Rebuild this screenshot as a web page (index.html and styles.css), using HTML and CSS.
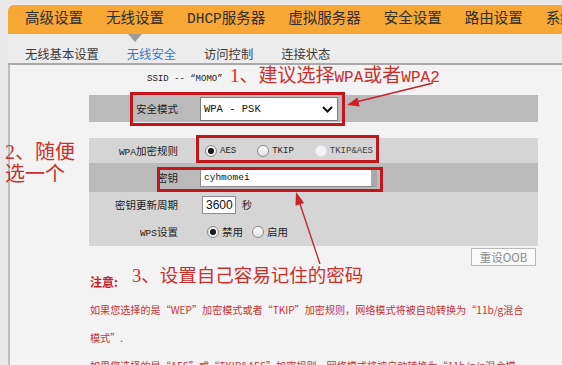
FILE: index.html
```html
<!DOCTYPE html>
<html lang="zh-CN">
<head>
<meta charset="utf-8">
<title>无线安全</title>
<link rel="stylesheet" href="styles.css">
</head>
<body>
<div class="page">
  <nav class="nav">
    <span class="nav-item">高级设置</span>
    <span class="nav-item active">无线设置</span>
    <span class="nav-item">DHCP服务器</span>
    <span class="nav-item">虚拟服务器</span>
    <span class="nav-item">安全设置</span>
    <span class="nav-item">路由设置</span>
    <span class="nav-item">系统工具</span>
  </nav>
  <div class="subnav">
    <span class="sub-item">无线基本设置</span>
    <span class="sub-item active">无线安全</span>
    <span class="sub-item">访问控制</span>
    <span class="sub-item">连接状态</span>
  </div>
  <main class="content">
    <div class="ssid">SSID -- “MOMO”</div>
    <div class="table t1">
      <div class="row dark r1">
        <div class="label">安全模式</div>
        <div class="ctrl">
          <div class="select">
            <span>WPA - PSK</span>
            <svg class="chev" width="11" height="7" viewBox="0 0 11 7"><polyline points="1,1 5.5,5.5 10,1" fill="none" stroke="#111" stroke-width="2"/></svg>
          </div>
        </div>
      </div>
    </div>
    <div class="table t2">
      <div class="row light r2">
        <div class="label"><span class="lat">WPA</span>加密规则</div>
        <div class="ctrl">
          <span class="choice"><span class="radio checked"></span><span class="opt">AES</span></span>
          <span class="choice"><span class="radio"></span><span class="opt">TKIP</span></span>
          <span class="choice"><span class="radio disabled"></span><span class="opt dim">TKIP&amp;AES</span></span>
        </div>
      </div>
      <div class="row dark r3">
        <div class="label">密钥</div>
        <div class="ctrl"><div class="input key">cyhmomei</div></div>
      </div>
      <div class="row light r4">
        <div class="label">密钥更新周期</div>
        <div class="ctrl"><div class="input period">3600</div><span class="unit">秒</span></div>
      </div>
      <div class="row light r5">
        <div class="label"><span class="lat">WPS</span>设置</div>
        <div class="ctrl wps">
          <span class="choice"><span class="radio checked"></span><span class="opt cjk">禁用</span></span>
          <span class="choice"><span class="radio"></span><span class="opt cjk">启用</span></span>
        </div>
      </div>
    </div>
    <div class="actions"><button class="btn">重设OOB</button></div>
    <div class="notes">
      <div class="note-title">注意:</div>
      <p>如果您选择的是“WEP”加密模式或者“TKIP”加密规则，网络模式将被自动转换为“11b/g混合<br>模式”.</p>
      <p>如果您选择的是“AES”或“TKIP&amp;AES”加密规则，网络模式将被自动转换为“11b/g/n混合模</p>
    </div>
  </main>
</div>
<div class="overlay">
  <div class="box box1"></div>
  <div class="box box2"></div>
  <div class="box box3"></div>
  <div class="ann ann1">1、建议选择<span class="lat">WPA</span>或者<span class="lat">WPA2</span></div>
  <div class="ann ann2">2、随便<br>选一个</div>
  <div class="ann ann3">3、设置自己容易记住的密码</div>
  <svg class="arrows" width="562" height="365" viewBox="0 0 562 365">
    <line x1="433" y1="83" x2="356" y2="102" stroke="#c8202a" stroke-width="1.3"/>
    <polygon points="347,105 359.7,106.4 357.5,97.6" fill="#d01f28"/>
    <line x1="320" y1="264" x2="299" y2="201" stroke="#c8202a" stroke-width="1.3"/>
    <polygon points="296,192 304.1,203 295.5,205.8" fill="#d01f28"/>
  </svg>
</div>
</body>
</html>
```
FILE: styles.css
```css
* { box-sizing: border-box; }
html, body { margin: 0; padding: 0; }
body {
  width: 562px;
  height: 365px;
  overflow: hidden;
  background: #e9e9e9;
  font-family: "Noto Sans CJK SC", sans-serif;
  color: #222;
}
.page { padding: 5px 0 0 8px; }

.nav {
  height: 29px;
  background: #f7a733;
  border-radius: 6px 0 0 0;
  display: flex;
  align-items: center;
  gap: 23px;
  padding-left: 17px;
  white-space: nowrap;
  font-family: "Liberation Mono", "Noto Sans CJK SC", monospace;
  font-size: 14.5px;
  color: #2e2e2e;
}
.nav-item { position: relative; line-height: 29px; flex: none; }
.nav-item.active::after {
  content: "";
  position: absolute;
  left: 50%;
  top: 29px;
  margin-left: -7px;
  border-left: 7px solid transparent;
  border-right: 7px solid transparent;
  border-top: 8px solid #9c9c9c;
}

.subnav {
  height: 31px;
  padding: 12px 0 0 17px;
  display: flex;
  gap: 28px;
  background: #ececec;
  border-bottom: 2px solid #a9a9a9;
  font-size: 12.3px;
  line-height: 16px;
  color: #3a3a3a;
}
.sub-item.active { color: #3b78c6; }

.content {
  height: 300px;
  background: #f3f3f3;
  border-left: 2px solid #bdbdbd;
}

.ssid {
  padding: 7px 0 0 137px;
  font-family: "Liberation Mono", monospace;
  font-size: 9px;
  line-height: 14px;
  color: #222;
}

.table { margin-left: 79px; width: 449px; }
.t1 { margin-top: 9px; }
.t2 { margin-top: 16px; }
.row {
  display: grid;
  grid-template-columns: 89px 1fr;
  column-gap: 22px;
  align-items: center;
}
.dark { background: #bababa; }
.light { background: #d5d5d5; }
.r1 { height: 27px; }
.r2 { height: 25px; }
.r3 { height: 29px; }
.r4 { height: 25px; }
.r5 { height: 29px; }

.label {
  text-align: right;
  font-size: 10.5px;
  color: #1c1c1c;
}
.label .lat { font-family: "Liberation Mono", monospace; font-size: 9.5px; }
.ctrl { display: flex; align-items: center; }

.select {
  width: 138px;
  height: 24px;
  margin-top: 1px;
  background: #fff;
  border: 1px solid #7d7d7d;
  display: flex;
  align-items: center;
  justify-content: space-between;
  padding: 0 4px 0 3px;
  font-family: "Liberation Mono", monospace;
  font-size: 10.5px;
  color: #111;
}

.choice { display: inline-flex; align-items: center; gap: 3px; margin-right: 21px; }
.r2 .ctrl { padding-left: 5px; }
.wps { padding-left: 7px; }
.wps .choice { margin-right: 9px; }
.radio {
  width: 12px;
  height: 12px;
  border-radius: 50%;
  border: 1px solid #8a8a8a;
  background: linear-gradient(#ffffff, #e2e2e2);
  flex: none;
}
.radio.checked {
  background: radial-gradient(circle, #1d1d1d 0 2.8px, #f5f5f5 3.3px, #dcdcdc 100%);
}
.radio.disabled { border-color: #e2e2e2; background: #f4f4f4; }
.opt { font-family: "Liberation Mono", monospace; font-size: 9px; color: #222; }
.opt.dim { color: #444; }
.opt.cjk { font-family: "Noto Sans CJK SC", sans-serif; font-size: 10.5px; }

.input {
  height: 18px;
  background: #fff;
  border: 1px solid #8d8d8d;
  display: flex;
  align-items: center;
  padding-left: 3px;
  color: #111;
}
.key {
  width: 177px;
  border-right: 6px solid #a9a9a9;
  font-family: "Liberation Mono", monospace;
  font-size: 9.5px;
}
.period {
  width: 34px;
  margin-left: 2px;
  font-family: "Liberation Sans", sans-serif;
  font-size: 12px;
}
.unit { margin-left: 6px; font-size: 10px; }

.actions {
  margin: 2px 0 0 79px;
  width: 449px;
  display: flex;
  justify-content: flex-end;
  padding-right: 2px;
}
.btn {
  width: 65px;
  height: 18px;
  padding: 0;
  background: #fafafa;
  border: 1px solid #b8b8b8;
  color: #8a8a8a;
  font-family: "Noto Sans CJK SC", sans-serif;
  font-size: 11.5px;
  line-height: 16px;
}

.notes {
  margin: 2px 0 0 80px;
  line-height: 28px;
  white-space: nowrap;
  color: #c53333;
}
.note-title { font-size: 12px; font-weight: bold; color: #c81e1e; }
.notes p { margin: 0; font-size: 10.1px; }

.overlay {
  position: absolute;
  left: 0;
  top: 0;
  width: 562px;
  height: 365px;
  pointer-events: none;
}
.box { position: absolute; border: 3px solid #c3161c; }
.box1 { left: 130px; top: 92px; width: 215px; height: 34px; }
.box2 { left: 196px; top: 135px; width: 183px; height: 28px; }
.box3 { left: 157px; top: 167px; width: 226px; height: 25px; }

.ann {
  position: absolute;
  white-space: nowrap;
  color: #c9302c;
  font-family: "Liberation Serif", "Noto Sans CJK SC", serif;
}
.ann .lat { font-family: "Liberation Mono", monospace; font-size: 16px; }
.ann1 { left: 230px; top: 64px; font-size: 19px; line-height: 24px; }
.ann2 { left: 5px; top: 141px; font-size: 20px; line-height: 22px; }
.ann3 { left: 132px; top: 263px; font-size: 18.5px; line-height: 26px; }
.arrows { position: absolute; left: 0; top: 0; }
```
